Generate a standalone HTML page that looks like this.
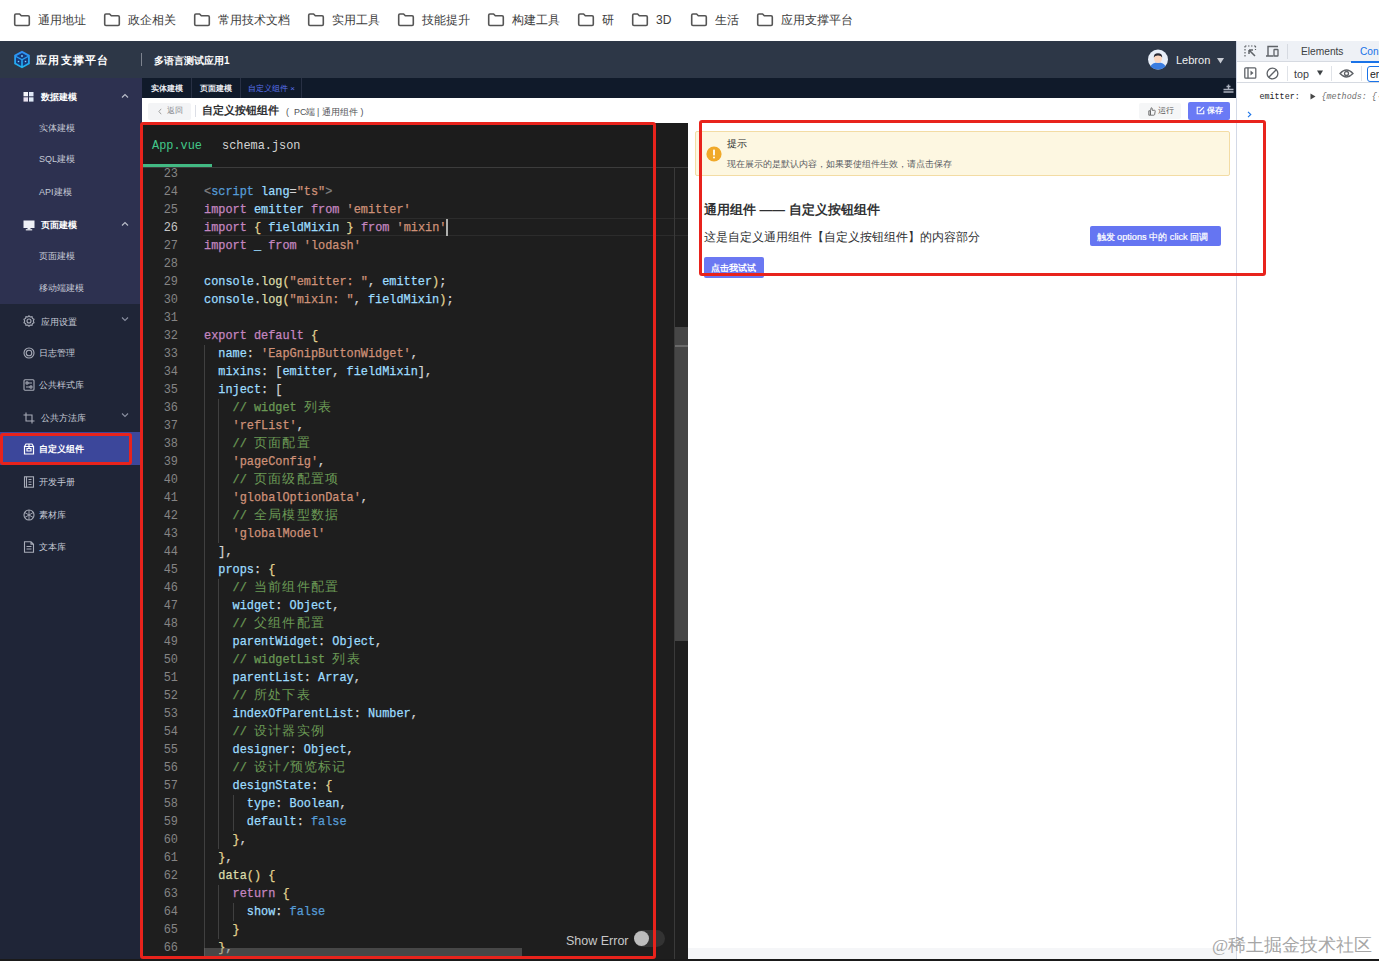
<!DOCTYPE html>
<html><head><meta charset="utf-8">
<style>
*{box-sizing:border-box;margin:0;padding:0}
html,body{width:1379px;height:961px;overflow:hidden;background:#fff;font-family:"Liberation Sans",sans-serif}
.a{position:absolute}
.bm{position:absolute;top:0;height:41px;font-size:12px;color:#3c3c3c;line-height:41px;white-space:nowrap}
.bm svg{position:absolute;left:-1px;top:13px}
.bm span{position:absolute;left:24px;top:0}
#hdr{left:0;top:41px;width:1236px;height:37px;background:#2d3747}
#side{left:0;top:78px;width:142px;height:883px;background:#1f2537}
#sideTop{left:0;top:78px;width:142px;height:226px;background:#2d3150}
.si{position:absolute;left:0;width:142px;height:32px;font-size:9px;color:#c9ccd8;line-height:32px;white-space:nowrap}
#tabs{left:142px;top:78px;width:1094px;height:20px;background:#101a2a}
#tool{left:142px;top:98px;width:1094px;height:25px;background:#fff}
#ed{left:142px;top:123px;width:546px;height:836px;background:#1e1e1e;overflow:hidden}
#pv{left:688px;top:123px;width:548px;height:836px;background:#fff}
#dt{left:1236px;top:41px;width:143px;height:920px;background:#fff;border-left:1px solid #d3d9e6}
.code{position:absolute;left:62px;-webkit-text-stroke:0.25px;font-family:"Liberation Mono",monospace;font-size:11.88px;color:#d4d4d4;white-space:pre;line-height:18px}
.ln{position:absolute;left:0;width:36px;text-align:right;font-family:"Liberation Mono",monospace;font-size:11.88px;color:#858585;line-height:18px}
.k{color:#c586c0}.v{color:#9cdcfe}.s{color:#ce9178}.c{color:#6a9955}.b{color:#e2d390}.t{color:#569cd6}.g{color:#808080}.f{color:#dcdcaa}
.ig{width:1px;background:#404040}
.cur{color:#c6c6c6}
.tt{top:2.5px;font-size:7.7px;line-height:16px;white-space:nowrap}
.cj{font-size:13px;letter-spacing:1.26px;-webkit-text-stroke:0}
.st{top:5.5px;font-size:8.9px;color:#505255;line-height:16px;white-space:nowrap}
.rb{position:absolute;border:3px solid #e8231c;border-radius:3px}
</style></head><body>

<!-- bookmark bar -->
<div id="bms"><div class="bm" style="left:14px"><svg width="18" height="14" viewBox="0 0 18 14"><path d="M1.7 2.2Q1.7 1 2.9 1H6.6L8.3 2.8H15.1Q16.3 2.8 16.3 4V11.3Q16.3 12.5 15.1 12.5H2.9Q1.7 12.5 1.7 11.3Z" fill="none" stroke="#555" stroke-width="1.6" stroke-linejoin="round"/></svg><span>通用地址</span></div><div class="bm" style="left:104px"><svg width="18" height="14" viewBox="0 0 18 14"><path d="M1.7 2.2Q1.7 1 2.9 1H6.6L8.3 2.8H15.1Q16.3 2.8 16.3 4V11.3Q16.3 12.5 15.1 12.5H2.9Q1.7 12.5 1.7 11.3Z" fill="none" stroke="#555" stroke-width="1.6" stroke-linejoin="round"/></svg><span>政企相关</span></div><div class="bm" style="left:194px"><svg width="18" height="14" viewBox="0 0 18 14"><path d="M1.7 2.2Q1.7 1 2.9 1H6.6L8.3 2.8H15.1Q16.3 2.8 16.3 4V11.3Q16.3 12.5 15.1 12.5H2.9Q1.7 12.5 1.7 11.3Z" fill="none" stroke="#555" stroke-width="1.6" stroke-linejoin="round"/></svg><span>常用技术文档</span></div><div class="bm" style="left:308px"><svg width="18" height="14" viewBox="0 0 18 14"><path d="M1.7 2.2Q1.7 1 2.9 1H6.6L8.3 2.8H15.1Q16.3 2.8 16.3 4V11.3Q16.3 12.5 15.1 12.5H2.9Q1.7 12.5 1.7 11.3Z" fill="none" stroke="#555" stroke-width="1.6" stroke-linejoin="round"/></svg><span>实用工具</span></div><div class="bm" style="left:398px"><svg width="18" height="14" viewBox="0 0 18 14"><path d="M1.7 2.2Q1.7 1 2.9 1H6.6L8.3 2.8H15.1Q16.3 2.8 16.3 4V11.3Q16.3 12.5 15.1 12.5H2.9Q1.7 12.5 1.7 11.3Z" fill="none" stroke="#555" stroke-width="1.6" stroke-linejoin="round"/></svg><span>技能提升</span></div><div class="bm" style="left:488px"><svg width="18" height="14" viewBox="0 0 18 14"><path d="M1.7 2.2Q1.7 1 2.9 1H6.6L8.3 2.8H15.1Q16.3 2.8 16.3 4V11.3Q16.3 12.5 15.1 12.5H2.9Q1.7 12.5 1.7 11.3Z" fill="none" stroke="#555" stroke-width="1.6" stroke-linejoin="round"/></svg><span>构建工具</span></div><div class="bm" style="left:578px"><svg width="18" height="14" viewBox="0 0 18 14"><path d="M1.7 2.2Q1.7 1 2.9 1H6.6L8.3 2.8H15.1Q16.3 2.8 16.3 4V11.3Q16.3 12.5 15.1 12.5H2.9Q1.7 12.5 1.7 11.3Z" fill="none" stroke="#555" stroke-width="1.6" stroke-linejoin="round"/></svg><span>研</span></div><div class="bm" style="left:632px"><svg width="18" height="14" viewBox="0 0 18 14"><path d="M1.7 2.2Q1.7 1 2.9 1H6.6L8.3 2.8H15.1Q16.3 2.8 16.3 4V11.3Q16.3 12.5 15.1 12.5H2.9Q1.7 12.5 1.7 11.3Z" fill="none" stroke="#555" stroke-width="1.6" stroke-linejoin="round"/></svg><span>3D</span></div><div class="bm" style="left:691px"><svg width="18" height="14" viewBox="0 0 18 14"><path d="M1.7 2.2Q1.7 1 2.9 1H6.6L8.3 2.8H15.1Q16.3 2.8 16.3 4V11.3Q16.3 12.5 15.1 12.5H2.9Q1.7 12.5 1.7 11.3Z" fill="none" stroke="#555" stroke-width="1.6" stroke-linejoin="round"/></svg><span>生活</span></div><div class="bm" style="left:757px"><svg width="18" height="14" viewBox="0 0 18 14"><path d="M1.7 2.2Q1.7 1 2.9 1H6.6L8.3 2.8H15.1Q16.3 2.8 16.3 4V11.3Q16.3 12.5 15.1 12.5H2.9Q1.7 12.5 1.7 11.3Z" fill="none" stroke="#555" stroke-width="1.6" stroke-linejoin="round"/></svg><span>应用支撑平台</span></div></div>

<div id="hdr" class="a">
<svg class="a" style="left:13px;top:9px" width="18" height="19" viewBox="0 0 18 19">
<defs><linearGradient id="lg1" x1="0" y1="0" x2="0" y2="1"><stop offset="0" stop-color="#2f8cf5"/><stop offset="1" stop-color="#1fb8f0"/></linearGradient></defs>
<path d="M9 0.8 L16.8 5 V14 L9 18.2 L1.2 14 V5 Z" fill="url(#lg1)"/>
<path d="M9 3 L14.6 6 L9 9 L3.4 6 Z" fill="#173a7a"/>
<path d="M3 7.3 L8.2 10.1 V15.9 L3 13.1 Z" fill="#173a7a"/>
<path d="M15 7.3 L9.8 10.1 V15.9 L15 13.1 Z" fill="#173a7a"/>
<circle cx="9" cy="6" r="0.9" fill="#7fd0ff"/><circle cx="5.5" cy="11.5" r="0.8" fill="#7fd0ff"/><circle cx="12.5" cy="11.5" r="0.8" fill="#7fd0ff"/>
</svg>
<div class="a" style="left:36px;top:12px;font-size:11px;font-weight:bold;color:#fff;letter-spacing:1.3px;line-height:14px;white-space:nowrap">应用支撑平台</div>
<div class="a" style="left:141px;top:12px;width:1px;height:13px;background:#7d838f"></div>
<div class="a" style="left:154px;top:12.5px;font-size:10px;font-weight:bold;color:#fff;line-height:14px;white-space:nowrap">多语言测试应用1</div>
<svg class="a" style="left:1148px;top:8px" width="20" height="21" viewBox="0 0 20 21">
<circle cx="10" cy="10.5" r="10" fill="#e8eef8"/>
<path d="M2.5 17.5 Q4 13.5 10 13.5 Q16 13.5 17.5 17.5 Q14.5 20.5 10 20.5 Q5.5 20.5 2.5 17.5Z" fill="#3b7de0"/>
<ellipse cx="10" cy="9.5" rx="4" ry="4.6" fill="#fbd6bf"/>
<path d="M5.8 8.5 Q5.6 4.2 10 4.2 Q14.4 4.2 14.2 8.5 Q13 6.5 10 6.6 Q7 6.5 5.8 8.5Z" fill="#2b2b35"/>
</svg>
<div class="a" style="left:1176px;top:12px;font-size:11px;color:#f0f0f0;line-height:14px">Lebron</div>
<svg class="a" style="left:1217px;top:16.5px" width="7" height="6" viewBox="0 0 7 6"><path d="M0 0H7L3.5 5.5Z" fill="#c8ccd4"/></svg>
</div>
<div id="side" class="a"></div>
<div id="sideTop" class="a"></div>
<div class="a" style="left:0;top:432px;width:142px;height:33px;background:#3c479b"></div><div class="a" style="left:41px;top:88.5px;font-size:9px;line-height:16px;color:#ffffff;white-space:nowrap;font-weight:bold;">数据建模</div><svg class="a" style="left:23px;top:90.5px" width="12" height="12" viewBox="0 0 12 12"><rect x="0.5" y="1" width="4.5" height="4.3" fill="#f4f4f8"/><rect x="6" y="1" width="4.5" height="4.3" fill="#dfe6f5"/><rect x="0.5" y="6.3" width="4.5" height="4.3" fill="#e8e0ee"/><rect x="6" y="6.3" width="4.5" height="4.3" fill="#dfe9f5"/></svg><svg class="a" style="left:121px;top:92.5px" width="8" height="6" viewBox="0 0 8 6"><path d="M1 4.5L4 1.5L7 4.5" stroke="#b8bcc8" stroke-width="1.2" fill="none"/></svg><div class="a" style="left:39px;top:119.7px;font-size:9px;line-height:16px;color:#c6cad6;white-space:nowrap;">实体建模</div><div class="a" style="left:39px;top:151.3px;font-size:9px;line-height:16px;color:#c6cad6;white-space:nowrap;">SQL建模</div><div class="a" style="left:39px;top:183.6px;font-size:9px;line-height:16px;color:#c6cad6;white-space:nowrap;">API建模</div><div class="a" style="left:41px;top:216.6px;font-size:9px;line-height:16px;color:#ffffff;white-space:nowrap;font-weight:bold;">页面建模</div><svg class="a" style="left:22.5px;top:218.6px" width="12" height="12" viewBox="0 0 12 12"><rect x="0.5" y="1.5" width="11" height="7.5" fill="#eef0f6"/><rect x="4.5" y="9" width="3" height="1.3" fill="#eef0f6"/><rect x="2.8" y="10.2" width="6.4" height="1.2" fill="#eef0f6"/></svg><svg class="a" style="left:121px;top:220.6px" width="8" height="6" viewBox="0 0 8 6"><path d="M1 4.5L4 1.5L7 4.5" stroke="#b8bcc8" stroke-width="1.2" fill="none"/></svg><div class="a" style="left:39px;top:247.8px;font-size:9px;line-height:16px;color:#c6cad6;white-space:nowrap;">页面建模</div><div class="a" style="left:39px;top:279.7px;font-size:9px;line-height:16px;color:#c6cad6;white-space:nowrap;">移动端建模</div><div class="a" style="left:41.2px;top:313.8px;font-size:9px;line-height:16px;color:#c6cad6;white-space:nowrap;">应用设置</div><svg class="a" style="left:22.5px;top:315.3px" width="12" height="12" viewBox="0 0 12 12"><circle cx="6" cy="6" r="2" stroke="#a8acb8" stroke-width="1.1" fill="none"/><path d="M6 0.8L7.2 2L9 1.7L9.4 3.4L11 4.3L10.3 6L11 7.7L9.4 8.6L9 10.3L7.2 10L6 11.2L4.8 10L3 10.3L2.6 8.6L1 7.7L1.7 6L1 4.3L2.6 3.4L3 1.7L4.8 2Z" stroke="#a8acb8" stroke-width="1.1" fill="none"/></svg><svg class="a" style="left:121px;top:315.8px" width="8" height="6" viewBox="0 0 8 6"><path d="M1 1.5L4 4.5L7 1.5" stroke="#8a8fa0" stroke-width="1.1" fill="none"/></svg><div class="a" style="left:39px;top:345.3px;font-size:9px;line-height:16px;color:#c6cad6;white-space:nowrap;">日志管理</div><svg class="a" style="left:22.5px;top:347.3px" width="12" height="12" viewBox="0 0 12 12"><circle cx="6" cy="6" r="5" stroke="#a8acb8" stroke-width="1.1" fill="none"/><circle cx="6" cy="6" r="2.8" stroke="#a8acb8" stroke-width="1.1" fill="none"/></svg><div class="a" style="left:39px;top:377px;font-size:9px;line-height:16px;color:#c6cad6;white-space:nowrap;">公共样式库</div><svg class="a" style="left:22.5px;top:378.5px" width="12" height="12" viewBox="0 0 12 12"><rect x="1" y="0.8" width="10" height="10.4" rx="1" stroke="#a8acb8" stroke-width="1.1" fill="none"/><circle cx="4" cy="4" r="1.1" stroke="#a8acb8" stroke-width="1.1" fill="none"/><circle cx="8" cy="8" r="1.1" stroke="#a8acb8" stroke-width="1.1" fill="none"/><path d="M5 4H9M3 8H7" stroke="#a8acb8" stroke-width="1.1" fill="none"/></svg><div class="a" style="left:41.2px;top:410px;font-size:9px;line-height:16px;color:#c6cad6;white-space:nowrap;">公共方法库</div><svg class="a" style="left:22.5px;top:412px" width="12" height="12" viewBox="0 0 12 12"><path d="M3 0.5V9H11.5M0.5 3H9V11.5" stroke="#a8acb8" stroke-width="1.1" fill="none"/></svg><svg class="a" style="left:121px;top:412px" width="8" height="6" viewBox="0 0 8 6"><path d="M1 1.5L4 4.5L7 1.5" stroke="#8a8fa0" stroke-width="1.1" fill="none"/></svg><div class="a" style="left:39px;top:440.8px;font-size:9px;line-height:16px;color:#ffffff;white-space:nowrap;font-weight:bold;">自定义组件</div><svg class="a" style="left:22.5px;top:442.5px" width="12" height="12" viewBox="0 0 12 12"><path d="M1.5 3.5H10.5V11H1.5Z M1.5 3.5L3 1H9L10.5 3.5 M4 5.5H8V8H4Z M6 5.5V1" stroke="#ffffff" stroke-width="1.2" fill="none"/></svg><div class="a" style="left:39px;top:474.3px;font-size:9px;line-height:16px;color:#c6cad6;white-space:nowrap;">开发手册</div><svg class="a" style="left:22.5px;top:476px" width="12" height="12" viewBox="0 0 12 12"><rect x="1.5" y="0.8" width="9" height="10.4" stroke="#a8acb8" stroke-width="1.1" fill="none"/><path d="M3.5 0.8V11.2M5.5 3.5H8.5M5.5 6H8.5M5.5 8.5H8.5" stroke="#a8acb8" stroke-width="1.1" fill="none"/></svg><div class="a" style="left:39px;top:506.5px;font-size:9px;line-height:16px;color:#c6cad6;white-space:nowrap;">素材库</div><svg class="a" style="left:22.5px;top:508.5px" width="12" height="12" viewBox="0 0 12 12"><circle cx="6" cy="6" r="5" stroke="#a8acb8" stroke-width="1.1" fill="none"/><path d="M6 1V11M1.7 3.5L10.3 8.5M1.7 8.5L10.3 3.5" stroke="#a8acb8" stroke-width="0.9" fill="none"/></svg><div class="a" style="left:39px;top:538.5px;font-size:9px;line-height:16px;color:#c6cad6;white-space:nowrap;">文本库</div><svg class="a" style="left:22.5px;top:540.5px" width="12" height="12" viewBox="0 0 12 12"><path d="M1.5 0.8H8L10.5 3.3V11.2H1.5Z M8 0.8V3.3H10.5 M3.5 5.5H8.5M3.5 8H8.5" stroke="#a8acb8" stroke-width="1.1" fill="none"/></svg>
<div id="tabs" class="a">
<div class="a" style="left:49px;top:0;width:1px;height:20px;background:#283044"></div>
<div class="a" style="left:98px;top:0;width:1px;height:20px;background:#283044"></div>
<div class="a" style="left:159px;top:0;width:1px;height:20px;background:#283044"></div>
<div class="a tt" style="left:9px;color:#e8eaf0;font-weight:bold">实体建模</div>
<div class="a tt" style="left:58px;color:#e8eaf0;font-weight:bold">页面建模</div>
<div class="a tt" style="left:106px;color:#5a72f0">自定义组件 <span style="font-size:8px">×</span></div>
<svg class="a" style="left:1081px;top:5.5px" width="11" height="9" viewBox="0 0 11 9"><path d="M5.5 0.5V5.5M3.5 2.5H7.5M0.5 5.5H10.5M0.5 8H10.5" stroke="#aab0bd" stroke-width="1.4" fill="none"/></svg>
</div>
<div id="tool" class="a">
<div class="a" style="left:6px;top:4.5px;width:42.5px;height:17px;background:#f3f4f6;border-radius:2px"></div>
<svg class="a" style="left:15.5px;top:9.5px" width="4" height="7" viewBox="0 0 4 7"><path d="M3.2 0.8L0.9 3.5L3.2 6.2" stroke="#999" stroke-width="0.9" fill="none"/></svg>
<div class="a" style="left:24.5px;top:5px;font-size:7.8px;color:#85888e;line-height:16px">返回</div>
<div class="a" style="left:53px;top:7px;width:1px;height:12px;background:#dcdfe6"></div>
<div class="a" style="left:59.5px;top:4px;font-size:11.4px;font-weight:bold;color:#303133;line-height:17px;white-space:nowrap">自定义按钮组件</div>
<div class="a st" style="left:144px">(</div><div class="a st" style="left:152px">PC端</div><div class="a st" style="left:175px">|</div><div class="a st" style="left:179.8px">通用组件</div><div class="a st" style="left:218.5px">)</div>
<div class="a" style="left:997px;top:4.5px;width:41.5px;height:16.5px;background:#f5f6f7;border-radius:2px"></div>
<svg class="a" style="left:1006px;top:8.5px" width="8" height="9" viewBox="0 0 8 9"><path d="M2.5 8.2V3.5L3.2 0.8Q4 0.6 4.2 1.5V3.3H6.6Q7.4 3.4 7.2 4.3L6.6 7.6Q6.4 8.2 5.8 8.2Z M0.8 3.8H2.3V8.2H0.8Z" fill="none" stroke="#666" stroke-width="0.9"/></svg><div class="a" style="left:1015.5px;top:5px;font-size:8px;color:#555;line-height:16px;white-space:nowrap">运行</div>
<div class="a" style="left:1046px;top:4px;width:41.5px;height:17.5px;background:#6a7af5;border-radius:2px"></div>
<svg class="a" style="left:1053.5px;top:7.5px" width="9" height="9" viewBox="0 0 9 9"><path d="M4.5 1.2H1.2V7.8H7.8V4.5" fill="none" stroke="#fff" stroke-width="1.1"/><path d="M3.5 5.5L7.8 1.2" stroke="#fff" stroke-width="1.2"/></svg><div class="a" style="left:1064.5px;top:4.5px;font-size:8px;color:#fff;font-weight:bold;line-height:16px;white-space:nowrap">保存</div>
</div>
<div id="ed" class="a">
<div class="a" style="left:0;top:0;width:546px;height:44px;background:#1c1c1c"></div>
<div class="a" style="left:10px;top:14px;font-family:'Liberation Mono',monospace;font-size:11.88px;color:#42c88a;line-height:18px">App.vue</div>
<div class="a" style="left:80px;top:14px;font-family:'Liberation Mono',monospace;font-size:11.88px;color:#d4d4d4;line-height:18px">schema.json</div>
<div class="a" style="left:0;top:41px;width:70px;height:3px;background:#42b983"></div>
<div class="a" style="left:0;top:44px;width:546px;height:1px;background:#3c3c3c"></div>
<div id="lines" class="a" style="left:0;top:45px;width:546px;height:791px;overflow:hidden">
<div class="a" style="left:0;top:-3px;width:546px;height:800px">
<div class="a" style="left:61px;top:53px;width:485px;height:18px;border-top:1px solid #2c2c2c;border-bottom:1px solid #2c2c2c"></div>
<div class="a ig" style="left:62px;top:180px;height:630px"></div>
<div class="a ig" style="left:76px;top:234px;height:144px"></div>
<div class="a ig" style="left:76px;top:414px;height:270px"></div>
<div class="a ig" style="left:76px;top:720px;height:54px"></div>
<div class="a ig" style="left:91px;top:630px;height:36px"></div>
<div class="a ig" style="left:91px;top:738px;height:18px"></div>
<div class="ln" style="top:0px">23</div>
<div class="code" style="top:0px"></div>
<div class="ln" style="top:18px">24</div>
<div class="code" style="top:18px"><span class="g">&lt;</span><span class="t">script</span> <span class="v">lang</span>=<span class="s">&quot;ts&quot;</span><span class="g">&gt;</span></div>
<div class="ln" style="top:36px">25</div>
<div class="code" style="top:36px"><span class="k">import</span> <span class="v">emitter</span> <span class="k">from</span> <span class="s">&#x27;emitter&#x27;</span></div>
<div class="ln cur" style="top:54px">26</div>
<div class="code" style="top:54px"><span class="k">import</span> <span class="b">{</span> <span class="v">fieldMixin</span> <span class="b">}</span> <span class="k">from</span> <span class="s">&#x27;mixin&#x27;</span></div>
<div class="ln" style="top:72px">27</div>
<div class="code" style="top:72px"><span class="k">import</span> <span class="v">_</span> <span class="k">from</span> <span class="s">&#x27;lodash&#x27;</span></div>
<div class="ln" style="top:90px">28</div>
<div class="code" style="top:90px"></div>
<div class="ln" style="top:108px">29</div>
<div class="code" style="top:108px"><span class="v">console</span>.<span class="f">log</span><span class="b">(</span><span class="s">&quot;emitter: &quot;</span>, <span class="v">emitter</span><span class="b">)</span>;</div>
<div class="ln" style="top:126px">30</div>
<div class="code" style="top:126px"><span class="v">console</span>.<span class="f">log</span><span class="b">(</span><span class="s">&quot;mixin: &quot;</span>, <span class="v">fieldMixin</span><span class="b">)</span>;</div>
<div class="ln" style="top:144px">31</div>
<div class="code" style="top:144px"></div>
<div class="ln" style="top:162px">32</div>
<div class="code" style="top:162px"><span class="k">export</span> <span class="k">default</span> <span class="b">{</span></div>
<div class="ln" style="top:180px">33</div>
<div class="code" style="top:180px">  <span class="v">name</span>: <span class="s">&#x27;EapGnipButtonWidget&#x27;</span>,</div>
<div class="ln" style="top:198px">34</div>
<div class="code" style="top:198px">  <span class="v">mixins</span>: [<span class="v">emitter</span>, <span class="v">fieldMixin</span>],</div>
<div class="ln" style="top:216px">35</div>
<div class="code" style="top:216px">  <span class="v">inject</span>: [</div>
<div class="ln" style="top:234px">36</div>
<div class="code" style="top:234px">    <span class="c">// widget <span class="cj">列表</span></span></div>
<div class="ln" style="top:252px">37</div>
<div class="code" style="top:252px">    <span class="s">&#x27;refList&#x27;</span>,</div>
<div class="ln" style="top:270px">38</div>
<div class="code" style="top:270px">    <span class="c">// <span class="cj">页面配置</span></span></div>
<div class="ln" style="top:288px">39</div>
<div class="code" style="top:288px">    <span class="s">&#x27;pageConfig&#x27;</span>,</div>
<div class="ln" style="top:306px">40</div>
<div class="code" style="top:306px">    <span class="c">// <span class="cj">页面级配置项</span></span></div>
<div class="ln" style="top:324px">41</div>
<div class="code" style="top:324px">    <span class="s">&#x27;globalOptionData&#x27;</span>,</div>
<div class="ln" style="top:342px">42</div>
<div class="code" style="top:342px">    <span class="c">// <span class="cj">全局模型数据</span></span></div>
<div class="ln" style="top:360px">43</div>
<div class="code" style="top:360px">    <span class="s">&#x27;globalModel&#x27;</span></div>
<div class="ln" style="top:378px">44</div>
<div class="code" style="top:378px">  ],</div>
<div class="ln" style="top:396px">45</div>
<div class="code" style="top:396px">  <span class="v">props</span>: <span class="b">{</span></div>
<div class="ln" style="top:414px">46</div>
<div class="code" style="top:414px">    <span class="c">// <span class="cj">当前组件配置</span></span></div>
<div class="ln" style="top:432px">47</div>
<div class="code" style="top:432px">    <span class="v">widget</span>: <span class="v">Object</span>,</div>
<div class="ln" style="top:450px">48</div>
<div class="code" style="top:450px">    <span class="c">// <span class="cj">父组件配置</span></span></div>
<div class="ln" style="top:468px">49</div>
<div class="code" style="top:468px">    <span class="v">parentWidget</span>: <span class="v">Object</span>,</div>
<div class="ln" style="top:486px">50</div>
<div class="code" style="top:486px">    <span class="c">// widgetList <span class="cj">列表</span></span></div>
<div class="ln" style="top:504px">51</div>
<div class="code" style="top:504px">    <span class="v">parentList</span>: <span class="v">Array</span>,</div>
<div class="ln" style="top:522px">52</div>
<div class="code" style="top:522px">    <span class="c">// <span class="cj">所处下表</span></span></div>
<div class="ln" style="top:540px">53</div>
<div class="code" style="top:540px">    <span class="v">indexOfParentList</span>: <span class="v">Number</span>,</div>
<div class="ln" style="top:558px">54</div>
<div class="code" style="top:558px">    <span class="c">// <span class="cj">设计器实例</span></span></div>
<div class="ln" style="top:576px">55</div>
<div class="code" style="top:576px">    <span class="v">designer</span>: <span class="v">Object</span>,</div>
<div class="ln" style="top:594px">56</div>
<div class="code" style="top:594px">    <span class="c">// <span class="cj">设计</span>/<span class="cj">预览标记</span></span></div>
<div class="ln" style="top:612px">57</div>
<div class="code" style="top:612px">    <span class="v">designState</span>: <span class="b">{</span></div>
<div class="ln" style="top:630px">58</div>
<div class="code" style="top:630px">      <span class="v">type</span>: <span class="v">Boolean</span>,</div>
<div class="ln" style="top:648px">59</div>
<div class="code" style="top:648px">      <span class="v">default</span>: <span class="t">false</span></div>
<div class="ln" style="top:666px">60</div>
<div class="code" style="top:666px">    <span class="b">}</span>,</div>
<div class="ln" style="top:684px">61</div>
<div class="code" style="top:684px">  <span class="b">}</span>,</div>
<div class="ln" style="top:702px">62</div>
<div class="code" style="top:702px">  <span class="f">data</span><span class="b">()</span> <span class="b">{</span></div>
<div class="ln" style="top:720px">63</div>
<div class="code" style="top:720px">    <span class="k">return</span> <span class="b">{</span></div>
<div class="ln" style="top:738px">64</div>
<div class="code" style="top:738px">      <span class="v">show</span>: <span class="t">false</span></div>
<div class="ln" style="top:756px">65</div>
<div class="code" style="top:756px">    <span class="b">}</span></div>
<div class="ln" style="top:774px">66</div>
<div class="code" style="top:774px">  <span class="b">}</span>,</div>
<div class="a" style="left:304px;top:53.5px;width:2px;height:17px;background:#aeafad"></div>
</div></div>
<div class="a" style="left:532px;top:44px;width:1px;height:792px;background:#3a3a3a"></div>
<div class="a" style="left:533px;top:204px;width:13px;height:314px;background:#464646"></div>
<div class="a" style="left:533px;top:222px;width:13px;height:2px;background:#6a6a6a"></div>
<div class="a" style="left:62px;top:825px;width:318px;height:7.5px;background:rgba(121,121,121,0.45)"></div>
<div class="a" style="left:424px;top:810px;font-size:12.5px;color:#c8c8c8;line-height:16px">Show Error</div>
<div class="a" style="left:492px;top:807px;width:31px;height:17px;border-radius:9px;background:#333"></div>
<div class="a" style="left:492px;top:808px;width:15px;height:15px;border-radius:50%;background:#bdbdbd"></div>
</div>
<div id="pv" class="a">
<div class="a" style="left:7px;top:8px;width:535px;height:44.5px;background:#fdf7e1;border:1px solid #f3dca4;border-radius:2px"></div>
<svg class="a" style="left:18px;top:22.5px" width="16" height="16" viewBox="0 0 16 16"><circle cx="8" cy="8" r="7.6" fill="#f0a92a"/><rect x="7.1" y="3.6" width="1.8" height="5.8" rx="0.6" fill="#fff"/><circle cx="8" cy="11.6" r="1" fill="#fff"/></svg>
<div class="a" style="left:39px;top:13.5px;font-size:10px;line-height:14px;color:#303133;white-space:nowrap">提示</div>
<div class="a" style="left:39px;top:35px;font-size:8.65px;line-height:12px;color:#5a5d63;white-space:nowrap">现在展示的是默认内容，如果要使组件生效，请点击保存</div>
<div class="a" style="left:16px;top:79.2px;font-size:12.75px;line-height:16px;font-weight:bold;color:#303133;white-space:nowrap">通用组件 —— 自定义按钮组件</div>
<div class="a" style="left:16px;top:105.5px;font-size:11.95px;line-height:16px;color:#303133;white-space:nowrap">这是自定义通用组件【自定义按钮组件】的内容部分</div>
<div class="a" style="left:402px;top:103.3px;width:130.5px;height:20.2px;background:#6575f2;border-radius:2px"></div>
<div class="a" style="left:408.5px;top:106.5px;font-size:9.2px;line-height:14px;color:#fff;white-space:nowrap;-webkit-text-stroke:0.2px #fff">触发 options 中的 click 回调</div>
<div class="a" style="left:16px;top:134px;width:60px;height:20.6px;background:#6b78f2;border-radius:2px"></div>
<div class="a" style="left:22.5px;top:137.5px;font-size:8.8px;line-height:14px;color:#fff;white-space:nowrap;font-weight:bold">点击我试试</div>
<div class="a" style="left:0;top:825px;width:548px;height:11px;background:#f5f6f8"></div>
</div>
<div id="dt" class="a">
<div class="a" style="left:0;top:0;width:142px;height:21px;background:#eef1f6;border-bottom:1px solid #d6dae1"></div>
<svg class="a" style="left:7px;top:4px" width="13" height="13" viewBox="0 0 13 13"><path d="M1 1H2.5M4 1H5.5M7 1H8.5M10 1H11.5M1 1V2.5M1 4V5.5M1 7V8.5M1 10V11.5M11.5 1V2.5M11.5 4V5" stroke="#5f6368" stroke-width="1.2" fill="none"/><path d="M5 5L11 11M5 5H9M5 5V9" stroke="#5f6368" stroke-width="1.5" fill="none"/></svg>
<svg class="a" style="left:28px;top:4px" width="14" height="13" viewBox="0 0 14 13"><path d="M3 10.5V1.5H13M1 11H8.5" stroke="#5f6368" stroke-width="1.4" fill="none"/><rect x="9" y="4.5" width="4" height="6.5" rx="0.6" stroke="#5f6368" stroke-width="1.3" fill="none"/></svg>
<div class="a" style="left:49.5px;top:3px;width:1px;height:15px;background:#d6dae1"></div>
<div class="a" style="left:64px;top:4px;font-size:10.2px;line-height:14px;color:#3c4043">Elements</div>
<div class="a" style="left:123px;top:4px;font-size:10.2px;line-height:14px;color:#1a73e8">Console</div>
<div class="a" style="left:114px;top:19.5px;width:30px;height:2px;background:#1a73e8"></div>
<div class="a" style="left:0;top:22px;width:142px;height:20px;background:#fff;border-bottom:1px solid #d6dae1"></div>
<svg class="a" style="left:7px;top:26px" width="13" height="12" viewBox="0 0 13 12"><rect x="0.8" y="0.8" width="11" height="10.4" rx="1" stroke="#5f6368" stroke-width="1.3" fill="none"/><path d="M4 0.8V11.2" stroke="#5f6368" stroke-width="1.3"/><path d="M6.5 3.5L9.5 6L6.5 8.5Z" fill="#5f6368"/></svg>
<svg class="a" style="left:28.5px;top:26px" width="13" height="13" viewBox="0 0 13 13"><circle cx="6.5" cy="6.5" r="5.4" stroke="#5f6368" stroke-width="1.3" fill="none"/><path d="M2.8 10.2L10.2 2.8" stroke="#5f6368" stroke-width="1.3"/></svg>
<div class="a" style="left:49.5px;top:25px;width:1px;height:15px;background:#e0e3e8"></div>
<div class="a" style="left:57px;top:25.5px;font-size:10.7px;line-height:14px;color:#3c4043">top</div>
<svg class="a" style="left:79.5px;top:28.5px" width="6" height="6" viewBox="0 0 6 6"><path d="M0 0.5H6L3 5.5Z" fill="#3c4043"/></svg>
<div class="a" style="left:94px;top:25px;width:1px;height:15px;background:#e0e3e8"></div>
<svg class="a" style="left:101.5px;top:28px" width="15" height="9" viewBox="0 0 15 9"><path d="M1 4.5Q7.5 -2.5 14 4.5Q7.5 11.5 1 4.5Z" stroke="#5f6368" stroke-width="1.3" fill="none"/><circle cx="7.5" cy="4.5" r="2" stroke="#5f6368" stroke-width="1.3" fill="none"/></svg>
<div class="a" style="left:124px;top:25px;width:1px;height:15px;background:#e0e3e8"></div>
<div class="a" style="left:129.5px;top:24.5px;width:20px;height:16px;border:1.3px solid #1a73e8;border-radius:3px;background:#fff"></div>
<div class="a" style="left:133px;top:25.5px;font-size:10.5px;line-height:14px;color:#202124">er</div>
<div class="a" style="left:22.5px;top:50px;font-family:'Liberation Mono',monospace;font-size:8.4px;line-height:12px;color:#202124;white-space:pre">emitter:</div>
<svg class="a" style="left:72.5px;top:52px" width="6" height="7" viewBox="0 0 6 7"><path d="M0.5 0.5L5.5 3.5L0.5 6.5Z" fill="#474747"/></svg>
<div class="a" style="left:84.5px;top:50px;font-family:'Liberation Mono',monospace;font-size:8.4px;line-height:12px;color:#6e6e6e;font-style:italic;white-space:pre">{methods: {&middot;</div>
<svg class="a" style="left:10px;top:69.5px" width="5" height="7" viewBox="0 0 5 7"><path d="M1 0.8L3.8 3.5L1 6.2" stroke="#1a73e8" stroke-width="1.1" fill="none"/></svg>
</div>
<div class="a" style="left:0;top:959px;width:1379px;height:2px;background:#1a1a1a"></div>

<div class="rb" style="left:0;top:433px;width:132px;height:32px"></div>
<div class="rb" style="left:140px;top:122px;width:516px;height:837px"></div>
<div class="rb" style="left:699px;top:120px;width:567px;height:155.5px"></div>
<div class="a" style="left:1212px;top:933.5px;font-size:17.5px;line-height:22px;color:#a6a6a6;white-space:nowrap;font-family:'Liberation Serif',serif">@稀土掘金技术社区</div>
</body></html>
